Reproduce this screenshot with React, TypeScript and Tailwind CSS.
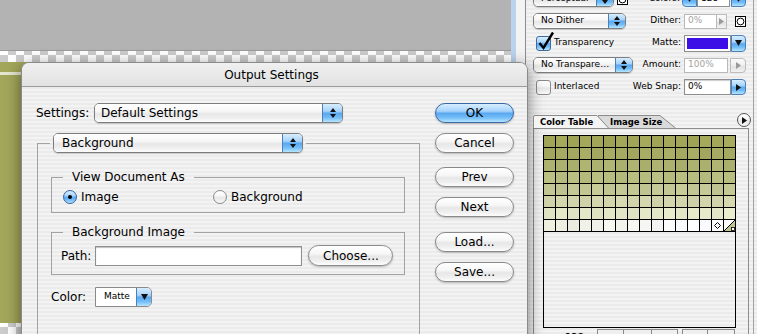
import React from "react";

const stripes =
  "bg-[repeating-linear-gradient(180deg,#ebebeb_0px,#ebebeb_2px,#f3f3f3_2px,#f3f3f3_4px)]";
const aquaWhite =
  "bg-[linear-gradient(180deg,#ffffff_0%,#f7f7f7_40%,#e7e7e7_55%,#f0f0f0_80%,#fdfdfd_100%)]";
const aquaBlue =
  "bg-[linear-gradient(180deg,#d8eeff_0%,#a6d3fc_40%,#5aa8f0_52%,#72bcf7_75%,#b6e6ff_100%)]";
const aquaGray =
  "bg-[linear-gradient(180deg,#fbfbfb_0%,#eeeeee_50%,#e0e0e0_52%,#f2f2f2_100%)]";
const checker =
  "bg-[conic-gradient(#cccccc_25%,#ffffff_0_50%,#cccccc_0_75%,#ffffff_0)] bg-[length:16px_16px] bg-[position:0_-4px]";

function UpDown() {
  return (
    <svg width="6" height="10" viewBox="0 0 6 10">
      <path d="M0 4 L3 0 L6 4 Z M0 6 L3 10 L6 6 Z" fill="#111" />
    </svg>
  );
}

function DownTri() {
  return (
    <svg width="7" height="6" viewBox="0 0 7 6">
      <path d="M0 0 H7 L3.5 6 Z" fill="#111" />
    </svg>
  );
}

function RightTri({ color = "#111" }: { color?: string }) {
  return (
    <svg width="5" height="7" viewBox="0 0 5 7">
      <path d="M0 0 L5 3.5 L0 7 Z" fill={color} />
    </svg>
  );
}

function Popup({
  label,
  className,
  textClass,
  arrowClass,
}: {
  label: string;
  className: string;
  textClass: string;
  arrowClass: string;
}) {
  return (
    <div className={`flex overflow-hidden border border-[#7d7d7d] shadow-[0_1px_1px_rgba(0,0,0,0.18)] ${className}`}>
      <div className={`flex flex-1 items-center whitespace-nowrap ${aquaWhite} ${textClass}`}>{label}</div>
      <div className={`flex items-center justify-center border-l border-[#4d7fb8] ${aquaBlue} ${arrowClass}`}>
        <UpDown />
      </div>
    </div>
  );
}

function AquaButton({ label, primary }: { label: string; primary?: boolean }) {
  return (
    <div
      className={`flex h-[20px] w-[79px] items-center justify-center rounded-full border text-[12px] shadow-[0_1px_2px_rgba(0,0,0,0.25)] ${
        primary ? `${aquaBlue} border-[#3b67a3]` : `${aquaWhite} border-[#8a8a8a]`
      }`}
    >
      {label}
    </div>
  );
}

function Checkbox({ checked }: { checked?: boolean }) {
  return (
    <div
      className={`relative h-[15px] w-[15px] rounded-[3px] border ${
        checked ? `${aquaBlue} border-[#3d6aa3]` : `${aquaWhite} border-[#8a8a8a]`
      }`}
    >
      {checked && (
        <svg className="absolute left-[0px] top-[-6px]" width="18" height="20" viewBox="0 0 18 20">
          <path d="M2.5 12 L6.5 17 L16 1.5" fill="none" stroke="#000" strokeWidth="2.4" />
        </svg>
      )}
    </div>
  );
}

function Radio({ on }: { on?: boolean }) {
  return (
    <div
      className={`flex h-[14px] w-[14px] items-center justify-center rounded-full border ${
        on ? `${aquaBlue} border-[#36649e]` : `${aquaWhite} border-[#8a8a8a]`
      }`}
    >
      {on && <div className="h-[4px] w-[4px] rounded-full bg-black" />}
    </div>
  );
}

function RingBox() {
  return (
    <svg width="11" height="11" viewBox="0 0 11 11">
      <rect x="0.5" y="0.5" width="10" height="10" fill="#fff" stroke="#000" />
      <circle cx="5.5" cy="5.5" r="3.4" fill="none" stroke="#000" />
    </svg>
  );
}

const rowBase = [
  [160, 165, 88],
  [164, 169, 95],
  [171, 176, 108],
  [182, 187, 126],
  [194, 198, 146],
  [209, 212, 171],
  [222, 225, 194],
  [236, 237, 221],
];
const jitter = [0, 4, -2, 3, 1, -3, 2, 0, 5, -1, 3, 1, -2, 4, 2, 6];

const cells = rowBase.flatMap((b, r) =>
  Array.from({ length: 16 }, (_, c) => {
    const lift = r >= 6 ? c * (r === 7 ? 1.1 : 0.5) : 0;
    const j = jitter[(c + r * 5) % 16];
    const ch = (v: number, extra = 0) => Math.min(255, Math.round(v + j + lift + extra));
    return `rgb(${ch(b[0])},${ch(b[1])},${ch(b[2], r === 7 ? lift * 1.4 : 0)})`;
  })
);

function ColorTable() {
  return (
    <div className={`h-[193px] w-[193px] shrink-0 border border-black ${stripes}`}>
      <div className="grid grid-cols-[repeat(16,11px)] gap-px border-b border-black bg-black">
        {cells.map((color, i) => {
          if (i === 126)
            return (
              <div key={i} className="flex h-[11px] items-center justify-center bg-white">
                <svg width="7" height="7" viewBox="0 0 7 7">
                  <path d="M3.5 0.5 L6.5 3.5 L3.5 6.5 L0.5 3.5 Z" fill="#fff" stroke="#000" />
                </svg>
              </div>
            );
          if (i === 127)
            return (
              <div key={i} className="h-[11px] bg-white">
                <svg width="11" height="11" viewBox="0 0 11 11">
                  <path d="M11 0 V11 H0 Z" fill="#c2c48f" />
                  <path d="M0 11 L11 0" stroke="#000" strokeWidth="1" />
                  <rect x="7.5" y="7.5" width="3" height="3" fill="#fff" stroke="#000" strokeWidth="0.8" />
                </svg>
              </div>
            );
          return <div key={i} className="h-[11px]" style={{ backgroundColor: color }} />;
        })}
      </div>
    </div>
  );
}

function SettingsPanel() {
  return (
    <div className={`flex w-[232px] border-l border-[#8c8c8c] ${stripes}`}>
      <div className="flex w-[228px] flex-col border-r border-[#a3a3a3] pl-[7px] text-[9px] text-black">
        <div className="mt-[-12px] shrink-0 pr-[7px]">
          {/* perceptual / colors */}
          <div className="flex h-[22px] items-center">
            <div className="flex w-[100px] items-center">
              <Popup label="Perceptual" className="h-[16px] w-[81px] rounded-[5px]" textClass="pl-[7px]" arrowClass="w-[17px]" />
              <div className="ml-[3px]">
                <RingBox />
              </div>
            </div>
            <div className="flex flex-1 justify-end pr-[2px] whitespace-nowrap">Colors:</div>
            <div className="flex h-[16px] w-[64px] items-center">
              <div className={`flex h-[16px] w-[15px] items-center justify-center rounded-l-[4px] border border-[#4d7fb8] ${aquaBlue}`}>
                <DownTri />
              </div>
              <div className="flex h-[15px] w-[33px] items-center border border-[#8e8e8e] bg-white pl-[3px]">128</div>
              <div className={`ml-px flex h-[16px] w-[15px] items-center justify-center rounded-r-[4px] border border-[#4d7fb8] ${aquaBlue}`}>
                <DownTri />
              </div>
            </div>
          </div>

          {/* dither */}
          <div className="flex h-[22px] items-center">
            <div className="w-[100px]">
              <Popup label="No Dither" className="h-[16px] w-[93px] rounded-[5px]" textClass="pl-[7px]" arrowClass="w-[17px]" />
            </div>
            <div className="flex flex-1 justify-end pr-[3px] whitespace-nowrap">Dither:</div>
            <div className="flex w-[62px] items-center">
              <div className="flex h-[15px] w-[33px] items-center border border-[#b9b9b9] bg-white pl-[3px] text-[#a3a3a3]">0%</div>
              <div className={`flex h-[15px] w-[10px] items-center justify-center border border-l-0 border-[#bcbcbc] ${aquaGray}`}>
                <RightTri color="#9a9a9a" />
              </div>
              <div className="ml-[8px] flex">
                <RingBox />
              </div>
            </div>
          </div>

          {/* transparency / matte */}
          <div className="flex h-[22px] items-center">
            <div className="flex w-[100px] items-center pl-[3px]">
              <Checkbox checked />
              <span className="ml-[3px] whitespace-nowrap">Transparency</span>
            </div>
            <div className="flex flex-1 justify-end pr-[3px] whitespace-nowrap">Matte:</div>
            <div className="flex h-[17px] w-[62px] items-stretch">
              <div className="flex-1 border border-[#8e8e8e] bg-white p-[2px]">
                <div className="h-full w-full bg-[#3b0fe6]" />
              </div>
              <div className={`flex w-[15px] items-center justify-center rounded-r-[4px] border border-[#4d7fb8] ${aquaBlue}`}>
                <DownTri />
              </div>
            </div>
          </div>

          {/* transparency dither / amount */}
          <div className="flex h-[22px] items-center">
            <div className="w-[100px]">
              <Popup label="No Transpare…" className="h-[16px] w-[100px] rounded-[5px]" textClass="pl-[7px]" arrowClass="w-[17px]" />
            </div>
            <div className="flex flex-1 justify-end pr-[3px] whitespace-nowrap">Amount:</div>
            <div className="flex w-[62px] items-center">
              <div className="flex h-[15px] w-[44px] items-center border border-[#b9b9b9] bg-white pl-[3px] text-[#a3a3a3]">100%</div>
              <div className={`ml-[2px] flex h-[15px] w-[16px] items-center justify-center rounded-r-[4px] border border-[#bcbcbc] ${aquaGray}`}>
                <RightTri color="#9a9a9a" />
              </div>
            </div>
          </div>

          {/* interlaced / web snap */}
          <div className="flex h-[22px] items-center">
            <div className="flex w-[100px] items-center pl-[3px]">
              <Checkbox />
              <span className="ml-[3px] whitespace-nowrap">Interlaced</span>
            </div>
            <div className="flex flex-1 justify-end pr-[3px] whitespace-nowrap">Web Snap:</div>
            <div className="flex h-[16px] w-[62px] items-stretch">
              <div className="flex w-[47px] items-center border border-[#8e8e8e] bg-white pl-[3px] shadow-[inset_0_1px_1px_rgba(0,0,0,0.2)]">0%</div>
              <div className={`flex w-[15px] items-center justify-center rounded-r-[4px] border border-[#4d7fb8] ${aquaBlue}`}>
                <RightTri />
              </div>
            </div>
          </div>
        </div>

        {/* color table tabs */}
        <div className="mt-[16px] flex h-[14px] shrink-0 items-end">
          <div className="relative z-10 h-[13px] w-[76px] pl-[7px] text-[8.5px] font-bold leading-[14px]">
            <svg className="absolute left-0 top-0" width="76" height="13" viewBox="0 0 76 13">
              <path d="M0.5 13 V2 Q0.5 0.5 2 0.5 H64 L75.5 13" fill="#f4f4f4" stroke="#8a8a8a" />
            </svg>
            <span className="relative">Color Table</span>
          </div>
          <div className="relative -ml-[11px] h-[13px] w-[78px] pl-[12px] text-[8.5px] font-bold leading-[14px]">
            <svg className="absolute left-0 top-0" width="78" height="13" viewBox="0 0 78 13">
              <path d="M0 13 V0.5 H62 L77.5 13" fill="#dadada" stroke="#8a8a8a" />
            </svg>
            <span className="relative">Image Size</span>
          </div>
          <div
            className={`mb-px ml-auto mr-[2px] flex h-[14px] w-[14px] items-center justify-center rounded-full border border-[#555] pl-px ${aquaWhite}`}
          >
            <RightTri />
          </div>
        </div>
        <div className="flex h-[230px] w-[216px] shrink-0 flex-col border border-b-0 border-[#8c8c8c] pl-[9px] pt-[6px]">
          <ColorTable />
          <div className="mt-[1px] flex shrink-0 items-start">
            <div className="w-[54px] pl-[22px] pt-[2px] text-[9px] font-bold">128</div>
            <div className="flex">
              <div className="h-[18px] w-[27px] border border-[#8a8a8a] bg-[#efefef]" />
              <div className="h-[18px] w-[28px] border border-l-0 border-[#8a8a8a] bg-[#efefef]" />
              <div className="h-[18px] w-[26px] border border-l-0 border-[#8a8a8a] bg-[#efefef]" />
              <div className="ml-[4px] h-[18px] w-[26px] border border-[#8a8a8a] bg-[#efefef]" />
              <div className="h-[18px] w-[27px] border border-l-0 border-[#8a8a8a] bg-[#efefef]" />
            </div>
          </div>
        </div>
      </div>
    </div>
  );
}

function OutputSettingsDialog() {
  return (
    <div
      className={`absolute left-[21px] top-[62px] flex h-[300px] w-[507px] flex-col overflow-hidden rounded-t-[8px] border border-[#8a8a8a] shadow-[0_4px_16px_rgba(0,0,0,0.5)] ${stripes}`}
    >
      <div className="flex h-[24px] shrink-0 items-center justify-center border-b border-[#9c9c9c] bg-[linear-gradient(180deg,#f0f0f0,#e2e2e2)] pr-[6px] text-[12px]">
        Output Settings
      </div>
      <div className="flex shrink-0 pl-[14px] pt-[16px] text-[12px] text-black">
        <div className="w-[384px]">
          <div className="flex h-[20px] items-center">
            <span className="w-[58px]">Settings:</span>
            <Popup label="Default Settings" className="h-[20px] w-[249px] rounded-[5px]" textClass="pl-[6px]" arrowClass="w-[20px]" />
          </div>

          <fieldset className="ml-px mt-[10px] w-[383px] border border-[#a2a2a2]">
            <legend className="ml-[12px] px-[3px]">
              <Popup label="Background" className="h-[20px] w-[250px] rounded-[5px]" textClass="pl-[8px]" arrowClass="w-[20px]" />
            </legend>
            <div className="pb-[60px] pl-[13px] pr-[14px] pt-[17px]">
              <fieldset className="border border-[#a2a2a2]">
                <legend className="ml-[11px] px-[9px] leading-[14px]">View Document As</legend>
                <div className="flex h-[28px] items-start pl-[11px] pt-[4px]">
                  <div className="flex h-[18px] w-[150px] items-center">
                    <Radio on />
                    <span className="ml-[4px]">Image</span>
                  </div>
                  <div className="flex h-[18px] items-center">
                    <Radio />
                    <span className="ml-[4px]">Background</span>
                  </div>
                </div>
              </fieldset>

              <fieldset className="mt-[12px] border border-[#a2a2a2]">
                <legend className="ml-[11px] px-[9px] leading-[14px]">Background Image</legend>
                <div className="flex items-center pb-[8px] pl-[9px] pt-[6px]">
                  <span>Path:</span>
                  <div className="ml-[4px] h-[20px] w-[207px] border border-[#8e8e8e] bg-white shadow-[inset_0_1px_1px_rgba(0,0,0,0.25)]" />
                  <div
                    className={`ml-[6px] flex h-[21px] w-[85px] items-center justify-center rounded-full border border-[#8a8a8a] shadow-[0_1px_2px_rgba(0,0,0,0.25)] ${aquaWhite}`}
                  >
                    Choose...
                  </div>
                </div>
              </fieldset>

              <div className="mt-[12px] flex items-center">
                <span className="w-[44px]">Color:</span>
                <div className="flex h-[20px] w-[57px] overflow-hidden rounded-r-[5px] border border-[#8a8a8a]">
                  <div className="flex flex-1 items-center bg-white pl-[8px] text-[9px]">Matte</div>
                  <div className={`flex w-[15px] items-center justify-center border-l border-[#4d7fb8] ${aquaBlue}`}>
                    <DownTri />
                  </div>
                </div>
              </div>
            </div>
          </fieldset>
        </div>

        <div className="ml-[15px] flex flex-col">
          <AquaButton label="OK" primary />
          <div className="mt-[10px]">
            <AquaButton label="Cancel" />
          </div>
          <div className="mt-[14px]">
            <AquaButton label="Prev" />
          </div>
          <div className="mt-[10px]">
            <AquaButton label="Next" />
          </div>
          <div className="mt-[15px]">
            <AquaButton label="Load..." />
          </div>
          <div className="mt-[10px]">
            <AquaButton label="Save..." />
          </div>
        </div>
      </div>
    </div>
  );
}

export default function App() {
  return (
    <div className="relative flex h-[334px] w-[757px] overflow-hidden bg-[#ececec] font-['DejaVu_Sans',sans-serif] text-black">
      {/* document preview */}
      <div className="flex w-[511px] flex-col">
        <div className="h-[51px] border-b border-[#9a9a9a] bg-[#b3b3b3]" />
        <div className={`flex-1 pt-[11px] ${checker}`}>
          <div className="h-[261px] w-[470px] rounded-tr-[6px] bg-[#a3a75b] pt-[10px]">
            <div className="h-[3px] bg-[#e4e6d0]" />
          </div>
        </div>
      </div>
      <div className="w-[5px] bg-[#bcd3ee]" />
      <div className="w-[9px] bg-[#f3f3f3]" />

      <SettingsPanel />

      <OutputSettingsDialog />
    </div>
  );
}
